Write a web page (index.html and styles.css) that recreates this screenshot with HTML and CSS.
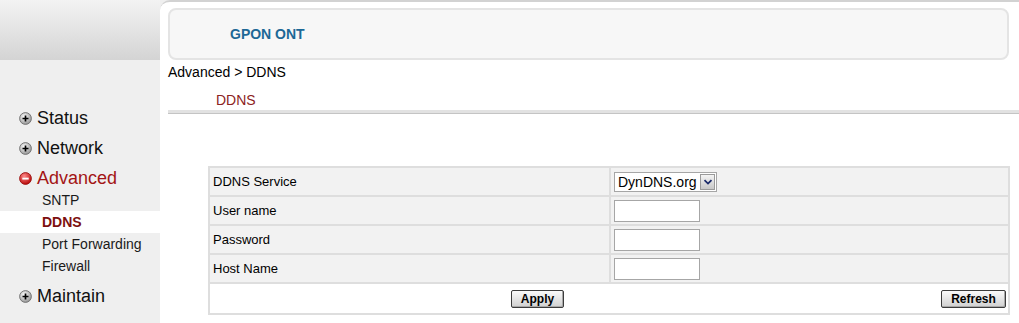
FILE: index.html
```html
<!DOCTYPE html>
<html>
<head>
<meta charset="utf-8">
<link rel="stylesheet" href="styles.css">
</head>
<body>
<div class="page">
  <aside class="sidebar">
    <div class="side-top"></div>
    <ul class="menu">
      <li class="item">
        <svg class="ico" viewBox="0 0 13 13"><defs><radialGradient id="g1" cx="40%" cy="35%" r="70%"><stop offset="0" stop-color="#ffffff"/><stop offset="1" stop-color="#8e8e8e"/></radialGradient></defs><circle cx="6.5" cy="6.5" r="5.9" fill="url(#g1)" stroke="#6e6e6e" stroke-width="0.9"/><path d="M3.5 6.5h6M6.5 3.5v6" stroke="#000" stroke-width="1.7"/></svg>
        <span>Status</span>
      </li>
      <li class="item">
        <svg class="ico" viewBox="0 0 13 13"><circle cx="6.5" cy="6.5" r="5.9" fill="url(#g1)" stroke="#6e6e6e" stroke-width="0.9"/><path d="M3.5 6.5h6M6.5 3.5v6" stroke="#000" stroke-width="1.7"/></svg>
        <span>Network</span>
      </li>
      <li class="item active">
        <svg class="ico" viewBox="0 0 13 13"><defs><radialGradient id="g2" cx="40%" cy="30%" r="75%"><stop offset="0" stop-color="#ff8a8a"/><stop offset="1" stop-color="#b40000"/></radialGradient></defs><circle cx="6.5" cy="6.5" r="5.9" fill="url(#g2)" stroke="#9a1010" stroke-width="0.9"/><path d="M3.3 6.6h6.4" stroke="#fff" stroke-width="1.9"/></svg>
        <span>Advanced</span>
      </li>
      <li>
        <ul class="sub">
          <li>SNTP</li>
          <li class="current">DDNS</li>
          <li>Port Forwarding</li>
          <li>Firewall</li>
        </ul>
      </li>
      <li class="item">
        <svg class="ico" viewBox="0 0 13 13"><circle cx="6.5" cy="6.5" r="5.9" fill="url(#g1)" stroke="#6e6e6e" stroke-width="0.9"/><path d="M3.5 6.5h6M6.5 3.5v6" stroke="#000" stroke-width="1.7"/></svg>
        <span>Maintain</span>
      </li>
    </ul>
  </aside>
  <main class="main">
    <div class="header"><span class="brand">GPON ONT</span></div>
    <div class="crumb">Advanced &gt; DDNS</div>
    <div class="title">DDNS</div>
    <div class="divider"></div>
    <table class="form">
      <tr>
        <td class="lbl">DDNS Service</td>
        <td class="val">
          <div class="selectbox">
            <select><option>DynDNS.org</option></select>
            <span class="arrow"><svg viewBox="0 0 10 8" width="10" height="8"><path d="M1.5 2.2L5 5.6L8.5 2.2" fill="none" stroke="#1a2a6a" stroke-width="1.8"/></svg></span>
          </div>
        </td>
      </tr>
      <tr><td class="lbl">User name</td><td class="val"><input type="text" class="txt"></td></tr>
      <tr><td class="lbl">Password</td><td class="val"><input type="password" class="txt"></td></tr>
      <tr><td class="lbl">Host Name</td><td class="val"><input type="text" class="txt"></td></tr>
      <tr class="btnrow">
        <td colspan="2">
          <div class="buttons">
            <button class="btn apply">Apply</button>
            <button class="btn refresh">Refresh</button>
          </div>
        </td>
      </tr>
    </table>
  </main>
</div>
</body>
</html>
```

FILE: styles.css
```css
* { box-sizing: border-box; }
html, body { margin: 0; padding: 0; }
body {
  font-family: "Liberation Sans", Arial, sans-serif;
  background: #efefef;
  color: #000;
  width: 1019px;
  height: 323px;
  overflow: hidden;
}
.page {
  display: flex;
  height: 323px;
}
.sidebar {
  width: 160px;
  flex: 0 0 160px;
  background: #efefef;
}
.side-top {
  height: 60px;
  background: linear-gradient(#f3f3f3, #d4d4d4);
}
.menu {
  list-style: none;
  margin: 0;
  padding: 43px 0 0 0;
}
.item {
  display: flex;
  align-items: center;
  height: 30px;
  padding-left: 19px;
  font-size: 18px;
  color: #111;
}
.item .ico {
  width: 13px;
  height: 13px;
  margin-right: 5px;
  flex: 0 0 13px;
}
.item.active { color: #a31515; }
.sub {
  list-style: none;
  margin: -4px 0 4px 0;
  padding: 0;
}
.sub li {
  height: 22px;
  line-height: 22px;
  padding-left: 42px;
  font-size: 14px;
  color: #1a1a1a;
}
.sub li.current {
  background: #fff;
  font-weight: bold;
  color: #7d1010;
}
.main {
  flex: 1;
  background: #fff;
  border-top: 2px solid #d2d2d2;
  border-top-left-radius: 10px;
  padding: 6px 0 0 8px;
}
.header {
  height: 52px;
  margin-right: 10px;
  background: #f7f7f7;
  border: 2px solid #e4e4e4;
  border-radius: 8px;
  display: flex;
  align-items: center;
  padding-left: 60px;
}
.brand {
  font-weight: bold;
  font-size: 14px;
  color: #1d6896;
}
.crumb {
  height: 24px;
  line-height: 24px;
  font-size: 14px;
}
.title {
  padding-top: 6px;
  height: 26px;
  line-height: 20px;
  padding-left: 48px;
  font-size: 14px;
  color: #8c2222;
}
.divider {
  height: 4px;
  background: #e2e2e2;
  border-bottom: 1px solid #c4c4c4;
}
.form {
  margin: 52px 9px 0 40px;
  width: 802px;
  border-collapse: collapse;
  border: 1px solid #dcdcdc;
  font-size: 13px;
}
.form td {
  border: 2px solid #dedede;
  padding: 0;
}
.form tr { height: 29px; }
.lbl {
  width: 401px;
  padding-left: 3px !important;
  background: #f2f2f2;
  border-right-width: 1px !important;
}
.val {
  background: #f2f2f2;
  padding-left: 3px !important;
}
.txt {
  display: block;
  width: 86px;
  height: 22px;
  border: 1px solid #a6a6a6;
  background: #fff;
  margin: 0;
  padding: 0 2px;
  font: 13px "Liberation Sans", Arial, sans-serif;
}
.selectbox {
  position: relative;
  width: 103px;
  height: 20px;
  border: 1px solid #a6a6a6;
  background: #fff;
}
.selectbox select {
  appearance: none;
  -webkit-appearance: none;
  border: 0;
  background: transparent;
  width: 100%;
  height: 18px;
  padding: 0 0 0 3px;
  margin: 0;
  font: 14px "Liberation Sans", Arial, sans-serif;
  color: #000;
  outline: none;
}
.arrow {
  position: absolute;
  right: 1px;
  top: 1px;
  width: 15px;
  height: 16px;
  background: linear-gradient(#f4f4f4, #c8c8c8);
  border: 1px solid #9a9a9a;
  display: flex;
  align-items: center;
  justify-content: center;
}
.btnrow { height: 31px !important; }
.btnrow td { background: #fff; }
.buttons {
  display: flex;
  align-items: center;
  padding: 0 2px 0 301px;
}
.btn {
  height: 18px;
  padding: 0;
  margin: 0;
  font: bold 12px "Liberation Sans", Arial, sans-serif;
  color: #000;
  border: 1px solid #3c3c3c;
  border-radius: 2px;
  background: linear-gradient(#fafafa, #d0d0d0);
  box-shadow: inset -1px -1px 0 #a8a8a8;
}
.apply { width: 53px; }
.refresh { width: 65px; margin-left: auto; }
```
